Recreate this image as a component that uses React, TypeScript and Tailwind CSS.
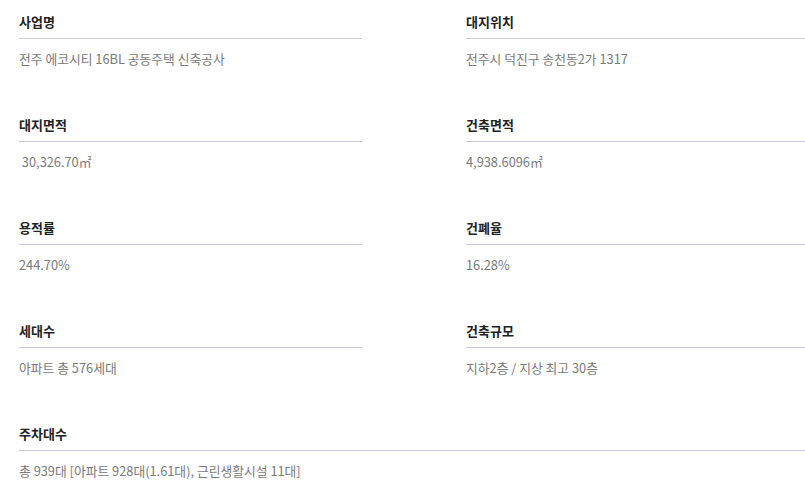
const items = [
  { label: '사업명', value: '전주 에코시티 16BL 공동주택 신축공사' },
  { label: '대지위치', value: '전주시 덕진구 송천동2가 1317' },
  { label: '대지면적', value: '\u00a030,326.70㎡' },
  { label: '건축면적', value: '4,938.6096㎡' },
  { label: '용적률', value: '244.70%' },
  { label: '건폐율', value: '16.28%' },
  { label: '세대수', value: '아파트 총 576세대' },
  { label: '건축규모', value: '지하2층 / 지상 최고 30층' },
  { label: '주차대수', value: '총 939대 [아파트 928대(1.61대), 근린생활시설 11대]', wide: true },
];

function InfoItem({ label, value, wide }: { label: string; value: string; wide?: boolean }) {
  return (
    <div className={wide ? 'col-span-2' : ''}>
      <div className="border-b border-[#c9cbda] pb-[6px] text-[13px] font-bold leading-[20px] text-[#222]">{label}</div>
      <div className="mt-[11px] text-[12.8px] leading-[18px] text-[#7a7a7a]">{value}</div>
    </div>
  );
}

export default function App() {
  return (
    <div
      className="h-[494px] w-[805px] overflow-hidden bg-white"
      style={{ fontFamily: '"Noto Sans CJK KR", "Noto Sans", sans-serif' }}>
      <div className="grid w-[809px] grid-cols-[343px_343px] gap-x-[104px] gap-y-[47px] pl-[19px] pt-[12px]">
        {items.map(item => (
          <InfoItem key={item.label} label={item.label} value={item.value} wide={item.wide} />
        ))}
      </div>
    </div>
  );
}
